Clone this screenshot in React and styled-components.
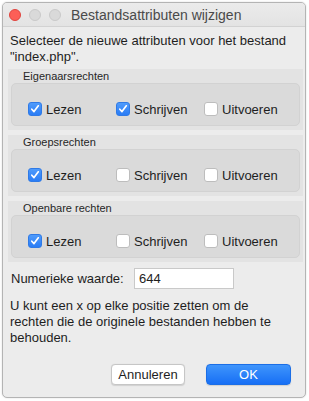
import React from "react";
import styled, { createGlobalStyle } from "styled-components";

const Global = createGlobalStyle`
  html, body { margin: 0; padding: 0; background: #ffffff; }
  body { font-family: "Liberation Sans", Arial, sans-serif; -webkit-font-smoothing: antialiased; }
  * { box-sizing: border-box; }
`;

const Page = styled.div`
  width: 309px;
  height: 401px;
  padding: 2px 3px 3px 2px;
`;

const Window = styled.div`
  width: 304px;
  height: 396px;
  border: 1px solid #b4b4b4;
  border-radius: 5px;
  background: #ececec;
  overflow: hidden;
  display: flex;
  flex-direction: column;
  box-shadow: 0 0 2px rgba(0,0,0,0.15);
`;

const TitleBar = styled.div`
  height: 24px;
  flex: none;
  display: flex;
  align-items: center;
  padding-left: 6px;
  background: linear-gradient(#ebebeb, #e3e3e3);
  border-bottom: 1px solid #d2d2d2;
`;

const Light = styled.span`
  width: 12px;
  height: 12px;
  border-radius: 50%;
  margin-right: 8px;
  background: ${p => (p.$red ? "#fc5f57" : "#d9d9d9")};
  border: 1px solid ${p => (p.$red ? "#e0443e" : "#c9c9c9")};
`;

const Title = styled.div`
  margin-left: 2px;
  font-size: 14px;
  color: #4a4a4a;
`;

const Content = styled.div`
  flex: 1;
  display: flex;
  flex-direction: column;
  padding: 6px 2px 0 5px;
  font-size: 13px;
  color: #1e1e1e;
`;

const Intro = styled.p`
  margin: 0 0 4px 2px;
  line-height: 16px;
`;

const Section = styled.div`
  background: #e3e3e3;
  height: 61px;
  margin-bottom: 5px;
  padding: 0 3px;
  display: flex;
  flex-direction: column;
`;

const SectionLabel = styled.div`
  font-size: 11px;
  color: #262626;
  padding: 1px 0 0 12px;
  height: 14px;
  line-height: 13px;
`;

const Box = styled.div`
  height: 43px;
  background: #dadada;
  border: 1px solid #d2d2d2;
  border-radius: 5px;
  display: grid;
  grid-template-columns: 88px 88px 88px;
  padding: 18px 0 0 16px;
`;

const Option = styled.label`
  display: flex;
  align-items: center;
  gap: 4px;
  font-size: 13px;
  height: 14px;
  color: #1e1e1e;
`;

const Check = styled.span`
  width: 14px;
  height: 14px;
  flex: none;
  border-radius: 3px;
  display: flex;
  align-items: center;
  justify-content: center;
  background: ${p => (p.$on ? "linear-gradient(#4f9bfb, #2a7cf5)" : "#ffffff")};
  border: 1px solid ${p => (p.$on ? "#2f7ae6" : "#bdbdbd")};
`;

const Field = styled.div`
  display: flex;
  align-items: center;
  margin: 1px 0 0 3px;
  height: 21px;
`;

const FieldLabel = styled.span`
  width: 123px;
`;

const Input = styled.div`
  width: 100px;
  height: 21px;
  background: #fff;
  border: 1px solid #c9c9c9;
  padding: 2px 0 0 4px;
  font-size: 13px;
  line-height: 16px;
`;

const Note = styled.p`
  margin: 9px 0 0 2px;
  width: 284px;
  line-height: 16px;
`;

const Buttons = styled.div`
  display: flex;
  justify-content: flex-end;
  gap: 21px;
  margin-top: auto;
  padding: 0 12px 12px 0;
`;

const Button = styled.div`
  height: 21px;
  width: ${p => p.$w}px;
  border-radius: 4px;
  display: flex;
  align-items: center;
  justify-content: center;
  font-size: 13px;
  color: ${p => (p.$primary ? "#fff" : "#1e1e1e")};
  background: ${p => (p.$primary ? "linear-gradient(#3f95fc, #176ff5)" : "#ffffff")};
  border: 1px solid ${p => (p.$primary ? "#1b6ee6" : "#c6c6c6")};
  box-shadow: 0 0.5px 1px rgba(0,0,0,0.12);
`;

const Tick = () => (
  <svg width="10" height="10" viewBox="0 0 10 10">
    <path d="M1.8 5.2 L4 7.6 L8.3 1.8" fill="none" stroke="#fff" strokeWidth="1.7" strokeLinecap="round" strokeLinejoin="round" />
  </svg>
);

const Opt = ({ on, children }) => (
  <Option>
    <Check $on={on}>{on && <Tick />}</Check>
    {children}
  </Option>
);

const groups = [
  { name: "Eigenaarsrechten", v: [true, true, false] },
  { name: "Groepsrechten", v: [true, false, false] },
  { name: "Openbare rechten", v: [true, false, false] },
];

export default function App() {
  return (
    <Page>
      <Global />
      <Window>
        <TitleBar>
          <Light $red />
          <Light />
          <Light />
          <Title>Bestandsattributen wijzigen</Title>
        </TitleBar>
        <Content>
          <Intro>
            Selecteer de nieuwe attributen voor het bestand
            <br />"index.php".
          </Intro>
          {groups.map(g => (
            <Section key={g.name}>
              <SectionLabel>{g.name}</SectionLabel>
              <Box>
                <Opt on={g.v[0]}>Lezen</Opt>
                <Opt on={g.v[1]}>Schrijven</Opt>
                <Opt on={g.v[2]}>Uitvoeren</Opt>
              </Box>
            </Section>
          ))}
          <Field>
            <FieldLabel>Numerieke waarde:</FieldLabel>
            <Input>644</Input>
          </Field>
          <Note>
            U kunt een x op elke positie zetten om de rechten die de originele bestanden hebben te behouden.
          </Note>
          <Buttons>
            <Button $w={74}>Annuleren</Button>
            <Button $w={85} $primary>OK</Button>
          </Buttons>
        </Content>
      </Window>
    </Page>
  );
}
